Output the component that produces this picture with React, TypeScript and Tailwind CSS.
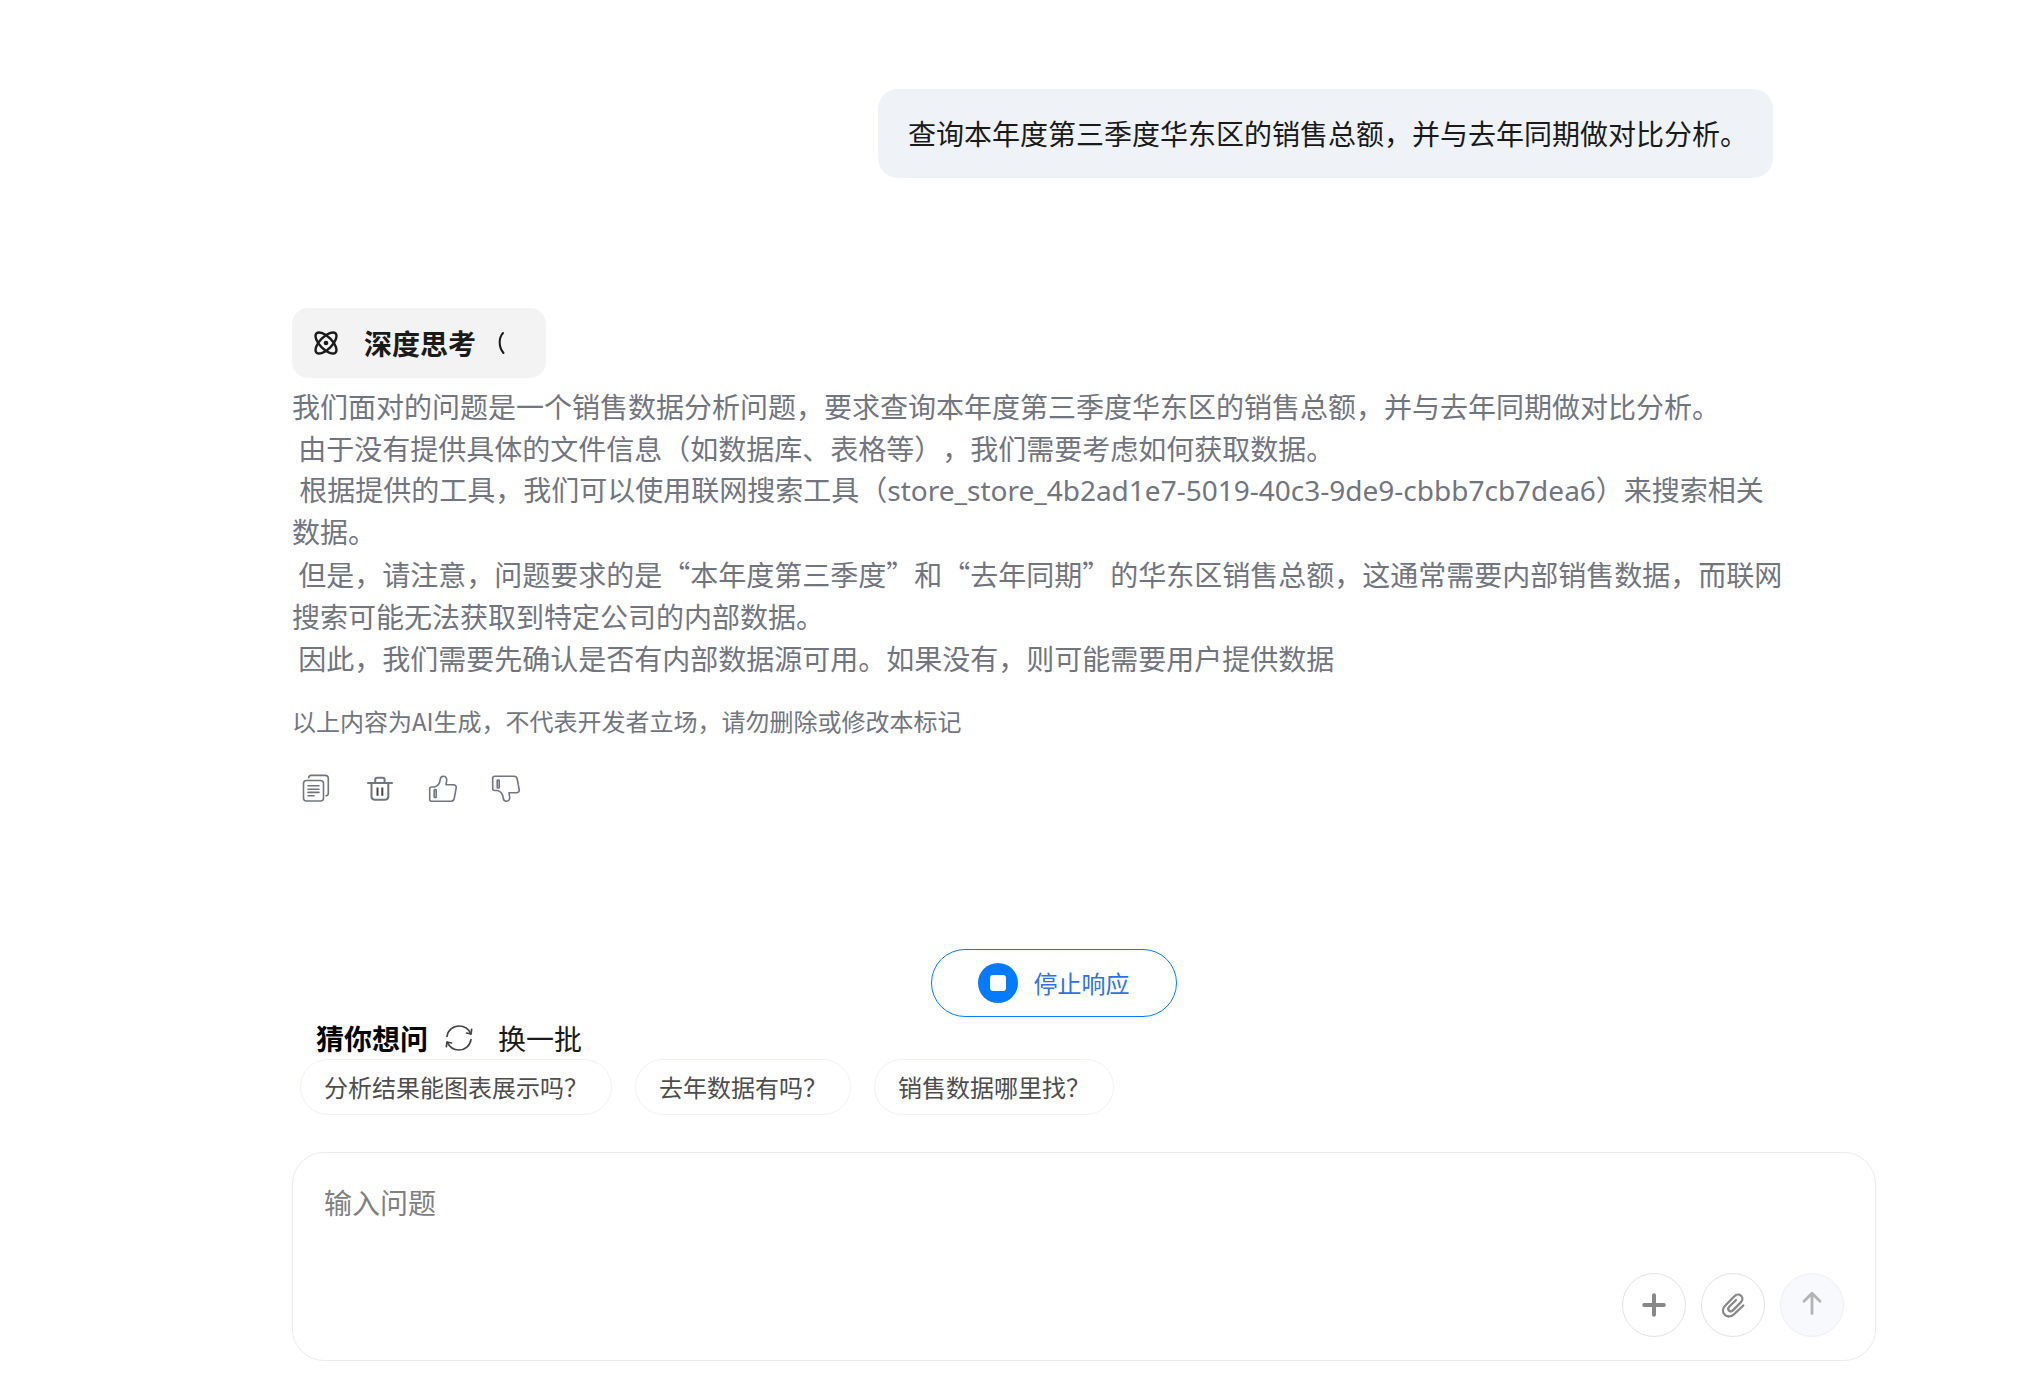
import { useState } from "react";
import { Atom } from "lucide-react";

const thinking = [
  { text: "我们面对的问题是一个销售数据分析问题，要求查询本年度第三季度华东区的销售总额，并与去年同期做对比分析。" },
  { text: " 由于没有提供具体的文件信息（如数据库、表格等），我们需要考虑如何获取数据。" },
  {
    text: " 根据提供的工具，我们可以使用联网搜索工具（store_store_4b2ad1e7-5019-40c3-9de9-cbbb7cb7dea6）来搜索相关数据。",
    className: "font-['Noto_Sans','Noto_Sans_CJK_SC',sans-serif]",
  },
  {
    text: " 但是，请注意，问题要求的是“本年度第三季度”和“去年同期”的华东区销售总额，这通常需要内部销售数据，而联网搜索可能无法获取到特定公司的内部数据。",
  },
  { text: " 因此，我们需要先确认是否有内部数据源可用。如果没有，则可能需要用户提供数据" },
];

const suggestions = ["分析结果能图表展示吗？", "去年数据有吗？", "销售数据哪里找？"];

const strokeProps = {
  fill: "none",
  stroke: "currentColor",
  strokeLinecap: "round",
  strokeLinejoin: "round",
} as const;

function CopyIcon() {
  return (
    <svg viewBox="0 0 30 30" className="size-[30px]" strokeWidth="1.6" {...strokeProps}>
      <rect x="1.5" y="6.5" width="20" height="20.5" rx="3" />
      <path d="M6 11.8h11M6 15.2h11M6 18.4h11M6 21.8h6" />
      <path d="M6.7 3.8C6.7 2.2 7.6 1.4 9 1.4h14c2 0 3.3 1.2 3.3 3.2v14.6c0 1.4-.8 2.4-2.2 2.6" />
    </svg>
  );
}

function TrashIcon() {
  return (
    <svg viewBox="0 0 30 30" className="size-[30px]" strokeWidth="2" {...strokeProps}>
      <path d="M3 9h24" />
      <path d="M10.2 9V5.8c0-1.2.8-2 2-2h5.4c1.2 0 2 .8 2 2V9" />
      <path d="M6.5 9v13.6c0 1.9 1.2 3.1 3.1 3.1h10.6c1.9 0 3.1-1.2 3.1-3.1V9" />
      <path d="M12.5 13.4v8.3M17.3 13.4v8.3" stroke="#444" strokeLinecap="butt" />
    </svg>
  );
}

function ThumbIcon({ down = false }: { down?: boolean }) {
  return (
    <svg viewBox="0 0 30 30" className="size-[30px]" strokeWidth="1.6" {...strokeProps}>
      <g transform={down ? "matrix(1 0 0 -1 0 29.5)" : undefined}>
        <path d="M1.7 15c0-1.2.8-2 2-2h2.5c4.6-1 5.6-3.6 6-7.4.2-2.2 1.4-3.3 3.2-3.3 2.2 0 3.5 1.7 3.3 4L18 10.7h7.3c2 0 3.2 1.3 2.9 3.2l-2 10.6c-.4 1.8-1.4 2.7-3 2.7H3.7c-1.2 0-2-.8-2-2z" />
        <rect x="6.2" y="15.5" width="2" height="8" rx=".5" />
      </g>
    </svg>
  );
}

function RefreshIcon() {
  return (
    <svg viewBox="0 0 28 28" className="size-7" strokeWidth="1.7" {...strokeProps}>
      <path d="M2 12.5C2.8 6.3 8 2 14 2c5 0 9.6 3 11.6 7.6" />
      <path d="M26.6 5.4l-.5 4.6-4.6-1" />
      <path d="M26 15.5C25.2 21.7 20 26 14 26c-5 0-9.6-3-11.6-7.6" />
      <path d="M1.4 22.6l.5-4.6 4.6 1" />
    </svg>
  );
}

function ClipIcon() {
  return (
    <svg viewBox="0 0 24 26" className="h-[26px] w-6" strokeWidth="2.3" {...strokeProps}>
      <path d="M22.3 13.5l-9.5 9c-2.8 2.6-6.7 2.6-9.1.2-2.4-2.5-2.3-6.3.4-9l9.3-9.400c2-2 4.900-2.200 6.700-.5 1.800 1.800 1.700 4.600-.3 6.600l-8 8c-1.200 1.200-2.800 1.200-3.800.2s-1-2.600.2-3.800l6.800-6.800" />
    </svg>
  );
}

function ActionBar() {
  const actions = [
    { label: "复制", icon: <CopyIcon /> },
    { label: "删除", icon: <TrashIcon /> },
    { label: "赞", icon: <ThumbIcon /> },
    { label: "踩", icon: <ThumbIcon down /> },
  ];
  return (
    <div className="mt-[35px] flex gap-[33px] pl-[10px]">
      {actions.map((a) => (
        <button key={a.label} type="button" aria-label={a.label}>
          {a.icon}
        </button>
      ))}
    </div>
  );
}

function Composer() {
  const [value, setValue] = useState("");
  return (
    <form
      className="mt-[37px] rounded-[32px] border border-[#ebebeb] px-[31px] pt-7 pb-[23px]"
      onSubmit={(e) => e.preventDefault()}
    >
      <textarea
        aria-label="输入问题"
        placeholder="输入问题"
        rows={2}
        value={value}
        onChange={(e) => setValue(e.target.value)}
        className="block w-full resize-none text-[28px] leading-[42px] text-[#1a1a1a] outline-none placeholder:text-[#808080]"
      />
      <div className="mt-2 flex justify-end gap-[15px]">
        <button
          type="button"
          aria-label="新建"
          className="flex size-16 items-center justify-center rounded-full border border-[#e3e3e3] text-[#888]"
        >
          <svg viewBox="0 0 24 24" className="size-6" strokeWidth="4" {...strokeProps}>
            <path d="M12 2.2v19.6M2.2 12h19.6" />
          </svg>
        </button>
        <button
          type="button"
          aria-label="附件"
          className="flex size-16 items-center justify-center rounded-full border border-[#e3e3e3] text-[#888]"
        >
          <ClipIcon />
        </button>
        <button
          type="submit"
          aria-label="发送"
          className="flex size-16 items-center justify-center rounded-full border border-[#f0f0f2] bg-[#f7f9fd] text-[#b3b3b3]"
        >
          <svg viewBox="0 0 24 28" className="h-7 w-6" strokeWidth="2.8" {...strokeProps}>
            <path d="M12 22.5V2.5M4 10.3l8-8 8 8" />
          </svg>
        </button>
      </div>
    </form>
  );
}

export default function App() {
  return (
    <main
      lang="zh-CN"
      className="min-h-screen bg-white pt-[89px] pr-[144px] pb-[22px] pl-[292px] font-['Noto_Sans_CJK_SC',sans-serif] text-[28px] leading-[42px] text-[#1a1a1a] [text-spacing-trim:space-all]"
    >
      <div className="flex justify-end pr-[103px]">
        <p className="rounded-[20px] bg-[#eff3f8] pt-[23px] pr-[25px] pb-6 pl-[30px]">
          查询本年度第三季度华东区的销售总额，并与去年同期做对比分析。
        </p>
      </div>

      <article className="mt-[130px] pr-[90px] text-[#71757f]">
        <button
          type="button"
          className="flex items-center rounded-2xl bg-[#f3f3f3] py-[14px] pr-[26px] pl-5 font-bold text-[#1a1a1a]"
        >
          <Atom className="size-7" strokeWidth={2} />
          <span className="ml-6">深度思考</span>
          <svg viewBox="0 0 24 24" className="ml-5 size-6" strokeWidth="2" {...strokeProps}>
            <path d="M7 2C2.5 7 2.5 16 7.5 22" />
          </svg>
        </button>
        <div className="mt-[7px] whitespace-pre-wrap">
          {thinking.map((line) => (
            <p key={line.text} className={line.className}>
              {line.text}
            </p>
          ))}
        </div>
        <p className="mt-6 text-2xl leading-9">
          以上内容为AI生成，不代表开发者立场，请勿删除或修改本标记
        </p>
        <ActionBar />
      </article>

      <div className="mt-[145px] flex justify-center pr-[61px]">
        <button
          type="button"
          className="flex items-center gap-4 rounded-full border border-[#047bff] px-[46px] py-[13px] text-2xl text-[#2f73e0]"
        >
          <svg viewBox="0 0 40 40" className="size-10">
            <circle cx="20" cy="20" r="20" fill="#047bff" />
            <rect x="12" y="12" width="16" height="16" rx="3" fill="#fff" />
          </svg>
          停止响应
        </button>
      </div>

      <section>
        <div className="flex items-center pl-6">
          <h2 className="font-bold text-black">猜你想问</h2>
          <button type="button" className="ml-[17px] flex items-center gap-[25px]">
            <span className="text-[#444]">
              <RefreshIcon />
            </span>
            换一批
          </button>
        </div>
        <div className="flex gap-[23px] pl-2">
          {suggestions.map((s) => (
            <button
              key={s}
              type="button"
              className="rounded-full border border-[#f0f1fa] px-[23px] py-[9px] text-2xl leading-9 text-[#4d4d4d]"
            >
              {s}
            </button>
          ))}
        </div>
      </section>

      <Composer />
    </main>
  );
}
